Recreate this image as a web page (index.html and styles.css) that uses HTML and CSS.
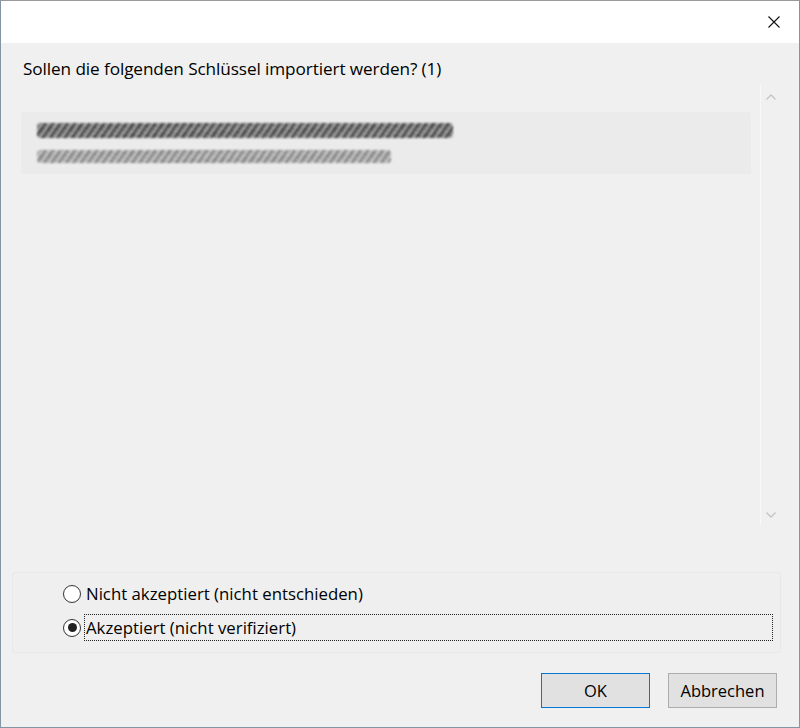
FILE: index.html
```html
<!DOCTYPE html>
<html lang="de">
<head>
<meta charset="utf-8">
<title>Schlüssel importieren</title>
<link rel="stylesheet" href="styles.css">
</head>
<body>
<div class="window">
  <div class="titlebar">
    <svg class="close" width="12" height="12" viewBox="0 0 12 12"><path d="M0.5 0.5 L11.5 11.5 M11.5 0.5 L0.5 11.5" stroke="#111" stroke-width="1.1" fill="none"/></svg>
  </div>
  <div class="content">
    <div class="question">Sollen die folgenden Schlüssel importiert werden? (1)</div>
    <div class="listarea">
      <div class="list">
        <div class="card">
          <div class="blur line1"></div>
          <div class="blur line2"></div>
        </div>
      </div>
      <div class="scrollbar">
        <svg width="12" height="8" viewBox="0 0 12 8"><path d="M1.5 6.5 L6 2 L10.5 6.5" stroke="#c4c4c4" stroke-width="1.3" fill="none"/></svg>
        <svg width="12" height="8" viewBox="0 0 12 8"><path d="M1.5 1.5 L6 6 L10.5 1.5" stroke="#c4c4c4" stroke-width="1.3" fill="none"/></svg>
      </div>
    </div>
    <div class="options">
      <label class="option"><span class="radio"></span><span class="label">Nicht akzeptiert (nicht entschieden)</span></label>
      <label class="option"><span class="radio checked"></span><span class="label focus">Akzeptiert (nicht verifiziert)</span></label>
    </div>
    <div class="buttons">
      <button class="btn default">OK</button>
      <button class="btn">Abbrechen</button>
    </div>
  </div>
</div>
</body>
</html>
```
FILE: styles.css
```css
html, body {
  margin: 0;
  padding: 0;
}
body {
  width: 800px;
  height: 728px;
  font-family: "Open Sans", "Noto Sans", "Liberation Sans", sans-serif;
  color: #000;
}
.window {
  box-sizing: border-box;
  width: 800px;
  height: 728px;
  border: 1px solid #8594a3;
  border-top-color: #9a9a9a;
  display: flex;
  flex-direction: column;
  background: #f0f0f0;
}
.titlebar {
  height: 42px;
  background: #fff;
  display: flex;
  justify-content: flex-end;
  align-items: center;
  padding-right: 19px;
  flex: none;
}
.close {
  display: block;
}
.content {
  flex: 1;
  display: flex;
  flex-direction: column;
  padding: 0 18px 0 11px;
}
.question {
  font-size: 17.2px;
  letter-spacing: -0.1px;
  line-height: 20px;
  margin-top: 16px;
  padding-left: 11px;
  height: 22px;
}
.listarea {
  margin-top: 4px;
  height: 440px;
  display: flex;
  margin-right: 0;
}
.list {
  flex: 1;
  padding: 27px 9px 0 9px;
}
.card {
  height: 62px;
  background: #ebebeb;
  border-radius: 2px;
  padding: 10px 16px 0;
  box-sizing: border-box;
}
.blur {
  filter: blur(1px);
  border-radius: 4px;
}
.line1 {
  width: 416px;
  height: 15px;
  margin-top: 1px;
  background: repeating-linear-gradient(125deg, #333 0 2px, #a0a0a0 2px 3px, #555 3px 4px, #b0b0b0 4px 6px);
}
.line2 {
  width: 354px;
  height: 13px;
  margin-top: 12px;
  background: repeating-linear-gradient(125deg, #7a7a7a 0 2px, #c4c4c4 2px 3px, #909090 3px 4px, #cfcfcf 4px 6px);
}
.scrollbar {
  width: 20px;
  border-left: 1px solid #f8f8f8;
  display: flex;
  flex-direction: column;
  justify-content: space-between;
  align-items: center;
  padding: 8px 0 6px;
}
.scrollbar svg {
  display: block;
}
.options {
  margin-top: 47px;
  height: 81px;
  box-sizing: border-box;
  border: 1px solid #e8e8e8;
  border-radius: 3px;
  background: #efefef;
  padding: 6px 7px 0 50px;
  display: flex;
  flex-direction: column;
  gap: 5px;
}
.option {
  display: flex;
  align-items: center;
  height: 29px;
  font-size: 16.8px;
}
.radio {
  width: 18px;
  height: 18px;
  box-sizing: border-box;
  border: 1px solid #333;
  border-radius: 50%;
  background: #fff;
  flex: none;
  margin-right: 3px;
  position: relative;
}
.radio.checked::after {
  content: "";
  position: absolute;
  left: 3.5px;
  top: 3.5px;
  width: 9px;
  height: 9px;
  border-radius: 50%;
  background: #222;
}
.label {
  padding: 0 1px;
  line-height: 25px;
  border: 1px solid transparent;
}
.label.focus {
  flex: 1;
  border: 1px dotted #222;
}
.buttons {
  display: flex;
  justify-content: flex-end;
  gap: 18px;
  margin-top: 20px;
  margin-right: 4px;
}
.btn {
  width: 109px;
  height: 35px;
  box-sizing: border-box;
  border: 1px solid #adadad;
  background: #e1e1e1;
  font-family: inherit;
  font-size: 16.5px;
  color: #000;
  padding: 0;
}
.btn.default {
  border-color: #0078d7;
}
```
